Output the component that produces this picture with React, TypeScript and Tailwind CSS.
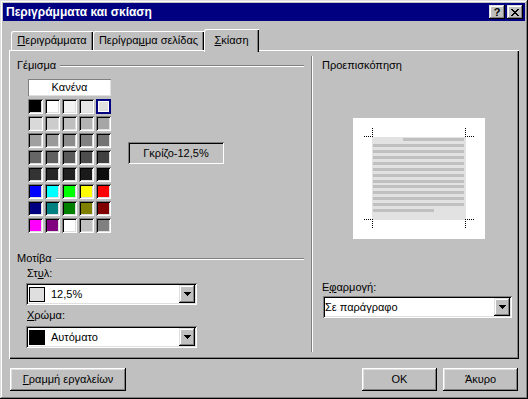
import React from "react";

const raised =
  "shadow-[inset_-1px_-1px_#000,inset_1px_1px_#fff,inset_-2px_-2px_#808080,inset_2px_2px_#dfdfdf]";
const raisedSmall =
  "shadow-[inset_-1px_-1px_#000,inset_1px_1px_#dfdfdf,inset_-2px_-2px_#808080,inset_2px_2px_#fff]";
const sunken =
  "shadow-[inset_1px_1px_#808080,inset_-1px_-1px_#fff,inset_2px_2px_#000,inset_-2px_-2px_#dfdfdf]";

const cells: string[] = [
  "#000000", "#ffffff", "#f2f2f2", "#e6e6e6", "#dfdfdf",
  "#d9d9d9", "#cccccc", "#bfbfbf", "#b3b3b3", "#a6a6a6",
  "#a0a0a0", "#999999", "#8c8c8c", "#808080", "#737373",
  "#666666", "#606060", "#595959", "#4d4d4d", "#404040",
  "#333333", "#262626", "#202020", "#1a1a1a", "#0d0d0d",
  "#0000ff", "#00ffff", "#00ff00", "#ffff00", "#ff0000",
  "#000080", "#008080", "#008000", "#808000", "#800000",
  "#ff00ff", "#800080", "#ffffff", "#c0c0c0", "#808080",
];

function DownArrow() {
  return (
    <svg width="7" height="4" shapeRendering="crispEdges">
      <path d="M0 0h7v1H0zM1 1h5v1H1zM2 2h3v1H2zM3 3h1v1H3z" fill="#000" />
    </svg>
  );
}

function CloseGlyph() {
  return (
    <svg width="8" height="7" shapeRendering="crispEdges">
      <path
        d="M0 0h2v1H0zM6 0h2v1H6zM1 1h2v1H1zM5 1h2v1H5zM2 2h4v1H2zM3 3h2v1H3zM2 4h4v1H2zM1 5h2v1H1zM5 5h2v1H5zM0 6h2v1H0zM6 6h2v1H6z"
        fill="#000"
      />
    </svg>
  );
}

function Combo({
  className,
  swatch,
  text,
  textClass,
}: {
  className: string;
  swatch?: string;
  text: string;
  textClass: string;
}) {
  return (
    <div className={`flex h-[22px] bg-white p-[2px] ${sunken} ${className}`}>
      <div className="flex flex-1 items-center min-w-0">
        {swatch && (
          <div
            className={`ml-[1px] w-[16px] h-[15px] border border-black ${swatch}`}
          />
        )}
        <span className={`whitespace-nowrap ${textClass}`}>{text}</span>
      </div>
      <div
        className={`w-[16px] h-[18px] bg-[#c0c0c0] flex items-center justify-center ${raisedSmall}`}
      >
        <DownArrow />
      </div>
    </div>
  );
}

function GroupLabel({ label, className }: { label: string; className: string }) {
  return (
    <div className={`flex items-center h-[13px] gap-[4px] ${className}`}>
      <span className="whitespace-nowrap">{label}</span>
      <div className="flex-1 h-[2px] border-t border-[#808080] bg-white" />
    </div>
  );
}

function Preview() {
  const lines: React.ReactNode[] = [];
  for (let k = 0; k < 13; k++) {
    const y = 20 + Math.round(k * 5.93);
    let x = 20;
    let w = 91;
    if (k === 0) {
      x = 50;
      w = 61;
    }
    if (k === 12) {
      w = 61;
    }
    lines.push(<rect key={k} x={x} y={y} width={w} height={3} fill="#c0c0c0" />);
  }
  const dots: React.ReactNode[] = [];
  const hdot = (x0: number, x1: number, y: number, key: string) => {
    for (let x = x0; x <= x1; x += 2)
      dots.push(<rect key={key + x} x={x} y={y} width={1} height={1} fill="#000" />);
  };
  const vdot = (x: number, y0: number, y1: number, key: string) => {
    for (let y = y0; y <= y1; y += 2)
      dots.push(<rect key={key + y} x={x} y={y} width={1} height={1} fill="#000" />);
  };
  hdot(11, 19, 18, "tlh");
  vdot(19, 10, 18, "tlv");
  hdot(112, 120, 18, "trh");
  vdot(112, 10, 18, "trv");
  hdot(11, 19, 101, "blh");
  vdot(19, 101, 109, "blv");
  hdot(112, 120, 101, "brh");
  vdot(112, 101, 109, "brv");
  return (
    <svg width="132" height="121" shapeRendering="crispEdges">
      <rect x="19" y="19" width="94" height="83" fill="#e2e2e2" />
      {lines}
      {dots}
    </svg>
  );
}

export default function App() {
  return (
    <div
      className={`w-[528px] h-[399px] bg-[#c0c0c0] p-[3px] flex flex-col font-['Liberation_Sans',Arial,sans-serif] text-[11px] leading-[13px] text-black shadow-[inset_-1px_-1px_#000,inset_1px_1px_#dfdfdf,inset_-2px_-2px_#808080,inset_2px_2px_#fff]`}
    >
      {/* Title bar */}
      <div className="h-[18px] bg-[#000080] flex items-center justify-between pl-[3px] pr-[2px]">
        <span className="text-white font-bold text-[12px] leading-[14px] whitespace-nowrap">
          Περιγράμματα και σκίαση
        </span>
        <div className="flex gap-[2px]">
          <div
            className={`w-[16px] h-[14px] bg-[#c0c0c0] flex items-center justify-center font-bold text-[11px] leading-[11px] ${raisedSmall}`}
          >
            ?
          </div>
          <div
            className={`w-[16px] h-[14px] bg-[#c0c0c0] flex items-center justify-center ${raisedSmall}`}
          >
            <CloseGlyph />
          </div>
        </div>
      </div>

      {/* Tabs + panel */}
      <div className="pl-[6px] pt-[8px]">
        <div className="flex items-end h-[21px] pl-[2px]">
          <div className="w-[82px] h-[19px] flex items-center justify-center rounded-tl-[2px] shadow-[inset_1px_1px_#fff,inset_-1px_0_#000,inset_-2px_0_#808080]">
            <span className="whitespace-nowrap">
              <span className="underline underline-offset-1">Π</span>εριγράμματα
            </span>
          </div>
          <div className="w-[111px] h-[19px] flex items-center justify-center rounded-tl-[2px] shadow-[inset_1px_1px_#fff,inset_-1px_0_#000,inset_-2px_0_#808080]">
            <span className="whitespace-nowrap">
              Περίγρα<span className="underline underline-offset-1">μ</span>μα σελίδας
            </span>
          </div>
          <div className="relative z-10 w-[55px] h-[23px] -mb-[2px] bg-[#c0c0c0] flex items-center justify-center rounded-tl-[2px] shadow-[inset_1px_1px_#fff,inset_-1px_0_#000,inset_-2px_0_#808080]">
            <span className="whitespace-nowrap">
              <span className="underline underline-offset-1">Σ</span>κίαση
            </span>
          </div>
        </div>

        <div className="w-[510px] h-[309px] flex shadow-[inset_1px_1px_#fff,inset_-1px_-1px_#000,inset_-2px_-2px_#808080]">
          {/* Left column */}
          <div className="w-[303px] pl-[8px] pr-[7px] pt-[9px] flex flex-col">
            <GroupLabel label="Γέμισμα" className="" />
            <div className="flex ml-[11px] mt-[7px]">
              <div className="flex flex-col w-[83px]">
                <div
                  className="h-[17px] bg-white flex items-center justify-center shadow-[inset_1px_1px_#808080,inset_-1px_-1px_#dfdfdf]"
                >
                  Κανένα
                </div>
                <div className="grid grid-cols-5 gap-[2px] mt-[3px]">
                  {cells.map((c, i) =>
                    i === 4 ? (
                      <div
                        key={i}
                        className="w-[15px] h-[15px] shadow-[inset_0_0_0_2px_#000080,inset_0_0_0_3px_#fff]"
                        style={{ backgroundColor: c }}
                      />
                    ) : (
                      <div
                        key={i}
                        className={`w-[15px] h-[15px] ${sunken}`}
                        style={{ backgroundColor: c }}
                      />
                    )
                  )}
                </div>
              </div>
              <div className="ml-[17px] mt-[63px] w-[96px] h-[22px] flex items-center justify-center shadow-[inset_1px_1px_#808080,inset_-1px_-1px_#fff,inset_2px_2px_#000]">
                Γκρίζο-12,5%
              </div>
            </div>
            <GroupLabel label="Μοτίβα" className="mt-[19px]" />
            <div className="ml-[10px] mt-[2px] h-[13px]">
              Στ<span className="underline underline-offset-1">υ</span>λ:
            </div>
            <Combo
              className="ml-[9px] mt-[3px] w-[171px]"
              swatch="bg-[#dfdfdf]"
              text="12,5%"
              textClass="ml-[6px]"
            />
            <div className="ml-[10px] mt-[4px] h-[13px]">
              <span className="underline underline-offset-1">Χ</span>ρώμα:
            </div>
            <Combo
              className="ml-[9px] mt-[4px] w-[171px]"
              swatch="bg-black"
              text="Αυτόματο"
              textClass="ml-[6px]"
            />
          </div>

          {/* Separator */}
          <div className="w-[2px] mt-[6px] mb-[7px] border-l border-[#808080] bg-white" />

          {/* Right column */}
          <div className="flex-1 pl-[9px] pr-[7px] pt-[9px] flex flex-col">
            <div className="h-[13px] flex items-center">Προεπισκόπηση</div>
            <div className="ml-[31px] mt-[46px] w-[132px] h-[121px] bg-white">
              <Preview />
            </div>
            <div className="mt-[42px] h-[13px]">
              Ε<span className="underline underline-offset-1">φ</span>αρμογή:
            </div>
            <Combo
              className="ml-[1px] mt-[2px] w-[189px]"
              text="Σε παράγραφο"
              textClass="ml-[0px]"
            />
          </div>
        </div>
      </div>

      {/* Bottom buttons */}
      <div className="mt-[9px] flex pl-[7px] pr-[7px]">
        <div
          className={`w-[116px] h-[23px] flex items-center justify-center ${raised}`}
        >
          <span className="whitespace-nowrap">
            <span className="underline underline-offset-1">Γ</span>ραμμή εργαλείων
          </span>
        </div>
        <div className="flex-1" />
        <div className={`w-[75px] h-[23px] flex items-center justify-center ${raised}`}>
          OK
        </div>
        <div
          className={`ml-[6px] w-[75px] h-[23px] flex items-center justify-center ${raised}`}
        >
          Άκυρο
        </div>
      </div>
    </div>
  );
}
